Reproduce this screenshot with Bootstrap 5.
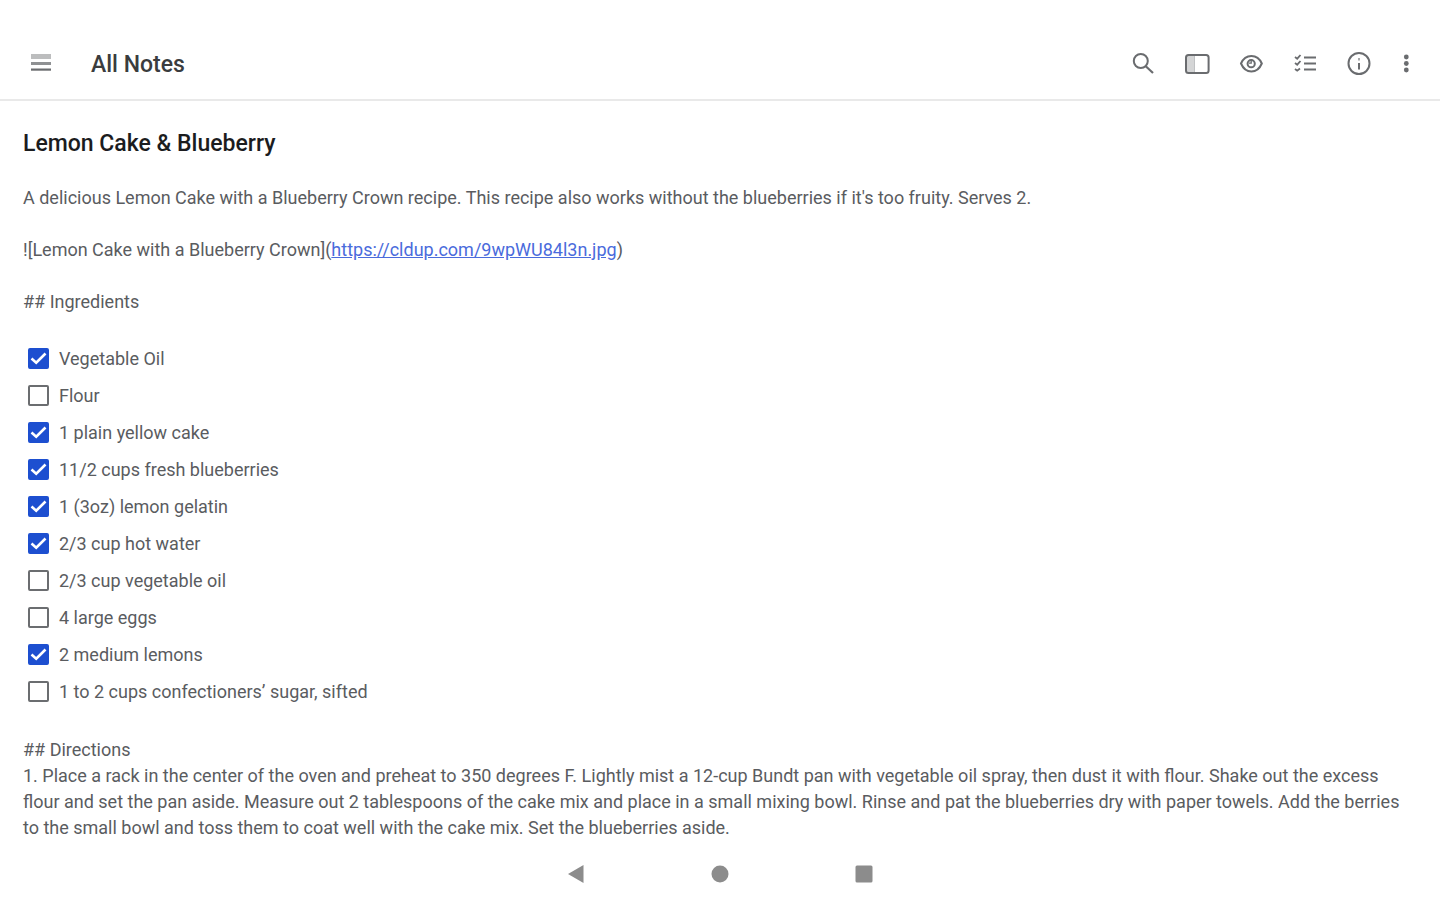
<!DOCTYPE html>
<html lang="en">
<head>
<meta charset="utf-8">
<meta name="viewport" content="width=device-width, initial-scale=1">
<title>All Notes</title>
<link rel="stylesheet" href="https://cdn.jsdelivr.net/npm/bootstrap@5.3.0/dist/css/bootstrap.min.css">
<style>
  body { font-family: Roboto, "Liberation Sans", sans-serif; font-size: 18px; line-height: 26px; color: #5a5c5f; background: #fff; }
  .topbar { padding: 36px 20px 8px 20px; border-bottom: 2px solid #e9e9e9; height: 101px; }
  .tool { width: 42px; height: 42px; border: 0; padding: 0; background: none; color: #6a6c6f; display: flex; align-items: center; justify-content: center; }
  .tool-slim { width: 28px; }
  .tool svg, .sys svg { display: block; }
  .bar-title { font-size: 23px; line-height: 30px; color: #3a3c3e; font-weight: 500; margin-left: 29px; padding-top: 3px; }
  .tools { gap: 12px; }
  .note { padding: 29px 23px 0; }
  .note-title { font-size: 23px; line-height: 28px; font-weight: 500; color: #1b1c1e; margin-bottom: 27px; }
  .note p { margin-bottom: 26px; }
  .note a { color: #4a6bdc; text-decoration: underline; }
  .todo { padding: 25px 0 0 5px; margin-bottom: 27px; }
  .todo li { height: 37px; gap: 10px; }
  .todo .form-check-input { width: 21px; height: 21px; margin: 0; border: 2px solid #6b6d70; border-radius: 2px; background-size: 21px; background-position: center; }
  .todo .form-check-input:checked { background-color: #1d4fd0; border-color: #1d4fd0;
    background-image: url("data:image/svg+xml,%3Csvg xmlns='http://www.w3.org/2000/svg' viewBox='0 0 21 21'%3E%3Cpath fill='none' stroke='%23fff' stroke-width='2.6' d='M3.500 10.500l4.700 4.200L17.500 5.500'/%3E%3C/svg%3E"); }
  .sys { height: 53px; gap: 104px; }
  .sys .tool { height: 40px; width: 40px; color: #8c8c8c; }
</style>
</head>
<body class="d-flex flex-column min-vh-100">
<header class="topbar d-flex align-items-center">
  <button class="tool" type="button" aria-label="Menu">
    <svg width="22" height="20" viewBox="0 0 22 20" fill="currentColor"><path opacity=".45" d="M1 0h20v5H1z"/><path opacity=".75" d="M1 8h20v3H1z"/><path d="M1 14.500h20v2.200H1z"/></svg>
  </button>
  <h1 class="bar-title mb-0">All Notes</h1>
  <div class="tools d-flex align-items-center ms-auto">
    <button class="tool" type="button" aria-label="Search">
      <svg width="22" height="22" viewBox="0 0 22 22" fill="none" stroke="currentColor" stroke-width="2"><circle cx="8.800" cy="8" r="7"/><path d="M13.500 13l7.500 7" stroke-width="2.200"/></svg>
    </button>
    <button class="tool" type="button" aria-label="Toggle sidebar">
      <svg width="26" height="22" viewBox="0 0 26 22"><path d="M3 2h8v18H3z" fill="#d4d5d6"/><rect x="2" y="2" width="22.600" height="18" rx="2.500" fill="none" stroke="currentColor" stroke-width="2"/><path d="M10.500 3v16" stroke="#bfc1c3" stroke-width="1"/></svg>
    </button>
    <button class="tool" type="button" aria-label="Preview">
      <svg width="24" height="20" viewBox="0 0 24 20" fill="none" stroke="currentColor" stroke-width="2"><path d="M2 9.500C4.200 4.500 7.600 2 12.400 2S20.600 4.500 22.800 9.500C20.600 14.700 17.200 17.500 12.400 17.500S4.200 14.700 2 9.500z"/><circle cx="12.200" cy="9.700" r="3.600"/><path d="M10 9.200h2.200V7" stroke-width="1.300"/></svg>
    </button>
    <button class="tool" type="button" aria-label="Checklist">
      <svg width="24" height="22" viewBox="0 0 24 22" fill="none" stroke="currentColor" stroke-width="2"><path d="M11 4.500h12M11 10.500h12M11 16.500h12"/><path d="M2 4l2.200 1.700L7.500 2M2 10l2.200 1.700L7.500 8M2 16l2.200 1.700L7 15.500" stroke-width="1.800"/></svg>
    </button>
    <button class="tool" type="button" aria-label="Information">
      <svg width="24" height="24" viewBox="0 0 24 24" fill="none" stroke="currentColor" stroke-width="2"><circle cx="12" cy="11.500" r="10.500"/><path d="M12 11v6.500"/><path d="M12 6v2.500" opacity=".6"/></svg>
    </button>
    <button class="tool tool-slim" type="button" aria-label="More options">
      <svg width="6" height="22" viewBox="0 0 6 22" fill="currentColor"><circle cx="3.300" cy="4" r="2.400"/><circle cx="3.300" cy="10.500" r="2.400"/><circle cx="3.300" cy="17" r="2.400"/></svg>
    </button>
  </div>
</header>
<main class="note flex-grow-1">
  <h2 class="note-title">Lemon Cake &amp; Blueberry</h2>
  <p>A delicious Lemon Cake with a Blueberry Crown recipe. This recipe also works without the blueberries if it's too fruity. Serves 2.</p>
  <p>![Lemon Cake with a Blueberry Crown](<a href="https://cldup.com/9wpWU84l3n.jpg">https://cldup.com/9wpWU84l3n.jpg</a>)</p>
  <div>## Ingredients</div>
  <ul class="todo list-unstyled">
    <li class="d-flex align-items-center"><input class="form-check-input" type="checkbox" id="i1" checked><label for="i1">Vegetable Oil</label></li>
    <li class="d-flex align-items-center"><input class="form-check-input" type="checkbox" id="i2"><label for="i2">Flour</label></li>
    <li class="d-flex align-items-center"><input class="form-check-input" type="checkbox" id="i3" checked><label for="i3">1 plain yellow cake</label></li>
    <li class="d-flex align-items-center"><input class="form-check-input" type="checkbox" id="i4" checked><label for="i4">11/2 cups fresh blueberries</label></li>
    <li class="d-flex align-items-center"><input class="form-check-input" type="checkbox" id="i5" checked><label for="i5">1 (3oz) lemon gelatin</label></li>
    <li class="d-flex align-items-center"><input class="form-check-input" type="checkbox" id="i6" checked><label for="i6">2/3 cup hot water</label></li>
    <li class="d-flex align-items-center"><input class="form-check-input" type="checkbox" id="i7"><label for="i7">2/3 cup vegetable oil</label></li>
    <li class="d-flex align-items-center"><input class="form-check-input" type="checkbox" id="i8"><label for="i8">4 large eggs</label></li>
    <li class="d-flex align-items-center"><input class="form-check-input" type="checkbox" id="i9" checked><label for="i9">2 medium lemons</label></li>
    <li class="d-flex align-items-center"><input class="form-check-input" type="checkbox" id="i10"><label for="i10">1 to 2 cups confectioners’ sugar, sifted</label></li>
  </ul>
  <div>## Directions</div>
  <div>1. Place a rack in the center of the oven and preheat to 350 degrees F. Lightly mist a 12-cup Bundt pan with vegetable oil spray, then dust it with flour. Shake out the excess flour and set the pan aside. Measure out 2 tablespoons of the cake mix and place in a small mixing bowl. Rinse and pat the blueberries dry with paper towels. Add the berries to the small bowl and toss them to coat well with the cake mix. Set the blueberries aside.</div>
</main>
<nav class="sys d-flex justify-content-center align-items-center" aria-label="System navigation">
  <button class="tool" type="button" aria-label="Back"><svg width="18" height="20" viewBox="0 0 18 20" fill="currentColor"><path d="M16.500 1v18L1 10z"/></svg></button>
  <button class="tool" type="button" aria-label="Home"><svg width="18" height="18" viewBox="0 0 18 18" fill="currentColor"><circle cx="9" cy="9" r="8.500"/></svg></button>
  <button class="tool" type="button" aria-label="Recent apps"><svg width="18" height="18" viewBox="0 0 18 18" fill="currentColor"><rect x=".5" y=".5" width="17" height="17" rx="1.500"/></svg></button>
</nav>
<script src="https://cdn.jsdelivr.net/npm/bootstrap@5.3.0/dist/js/bootstrap.bundle.min.js"></script>
</body>
</html>
